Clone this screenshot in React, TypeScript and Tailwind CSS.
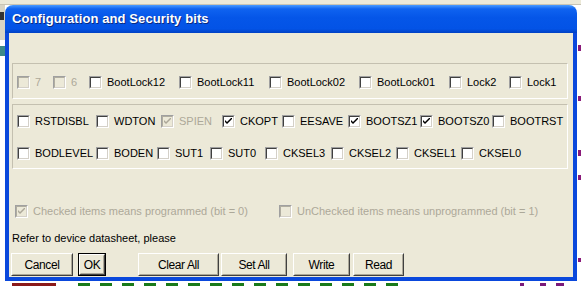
import React from "react";

const FONT = { fontFamily: '"Liberation Sans", Arial, sans-serif' };

function Box({ checked = false, disabled = false }: { checked?: boolean; disabled?: boolean }) {
  return (
    <div className="w-[13px] h-[13px] shrink-0 border border-t-[#a0a0a0] border-l-[#a0a0a0] border-b-white border-r-white">
      <div
        className={
          "w-full h-full border border-t-[#404040] border-l-[#404040] border-b-[#d4d0c8] border-r-[#d4d0c8] flex items-center justify-center " +
          (disabled ? "bg-[#ece9d8] border-t-[#b0ada0] border-l-[#b0ada0]" : "bg-white")
        }
      >
        {checked && (
          <svg width="7" height="7" viewBox="0 0 7 7">
            <path d="M0 2 L0 4 L2 6 L7 1 L7 -1 L2 4 Z" fill={disabled ? "#aca899" : "#000"} />
          </svg>
        )}
      </div>
    </div>
  );
}

type Item = { label: string; w?: number; checked?: boolean; disabled?: boolean };

function Check({ label, w, checked, disabled }: Item) {
  return (
    <div className="flex items-center gap-[5px] shrink-0" style={w ? { width: w } : undefined}>
      <Box checked={checked} disabled={disabled} />
      <span className={"text-[11px] leading-[13px] " + (disabled ? "text-[#aca899]" : "text-black")}>{label}</span>
    </div>
  );
}

function Row({ items }: { items: Item[] }) {
  return (
    <div className="flex items-center h-[13px]">
      {items.map((it) => (
        <Check key={it.label} {...it} />
      ))}
    </div>
  );
}

function Btn({ label, w, def = false }: { label: string; w: number; def?: boolean }) {
  return (
    <div className={"h-[23px] shrink-0 " + (def ? "border border-black" : "")} style={{ width: w }}>
      <div className="w-full h-full border border-t-white border-l-white border-b-[#404040] border-r-[#404040]">
        <div className="w-full h-full border border-t-[#ece9d8] border-l-[#ece9d8] border-b-[#aca899] border-r-[#aca899] flex items-center justify-center text-[12px] tracking-[-0.4px] text-black">
          {label}
        </div>
      </div>
    </div>
  );
}

export default function App() {
  const row1: Item[] = [
    { label: "7", w: 36, disabled: true },
    { label: "6", w: 36, disabled: true },
    { label: "BootLock12", w: 90 },
    { label: "BootLock11", w: 90 },
    { label: "BootLock02", w: 90 },
    { label: "BootLock01", w: 90 },
    { label: "Lock2", w: 60 },
    { label: "Lock1" },
  ];
  const row2: Item[] = [
    { label: "RSTDISBL", w: 79 },
    { label: "WDTON", w: 65 },
    { label: "SPIEN", w: 61, checked: true, disabled: true },
    { label: "CKOPT", w: 60, checked: true },
    { label: "EESAVE", w: 66 },
    { label: "BOOTSZ1", w: 72, checked: true },
    { label: "BOOTSZ0", w: 72, checked: true },
    { label: "BOOTRST" },
  ];
  const row3: Item[] = [
    { label: "BODLEVEL", w: 79 },
    { label: "BODEN", w: 61 },
    { label: "SUT1", w: 53 },
    { label: "SUT0", w: 55 },
    { label: "CKSEL3", w: 66 },
    { label: "CKSEL2", w: 65 },
    { label: "CKSEL1", w: 65 },
    { label: "CKSEL0" },
  ];

  const bottomMarks: { x: number; w: number; c: string }[] = [
    { x: 12, w: 44, c: "#8b1a1a" },
    { x: 78, w: 12, c: "#1a7a1a" },
    { x: 100, w: 12, c: "#1a7a1a" },
    { x: 122, w: 12, c: "#1a7a1a" },
    { x: 144, w: 12, c: "#1a7a1a" },
    { x: 166, w: 12, c: "#1a7a1a" },
    { x: 188, w: 12, c: "#1a7a1a" },
    { x: 210, w: 12, c: "#1a7a1a" },
    { x: 232, w: 12, c: "#1a7a1a" },
    { x: 254, w: 12, c: "#1a7a1a" },
    { x: 276, w: 12, c: "#1a7a1a" },
    { x: 298, w: 12, c: "#1a7a1a" },
    { x: 320, w: 12, c: "#1a7a1a" },
    { x: 342, w: 12, c: "#1a7a1a" },
    { x: 364, w: 12, c: "#1a7a1a" },
    { x: 386, w: 12, c: "#1a7a1a" },
    { x: 520, w: 4, c: "#7a1a7a" },
    { x: 540, w: 6, c: "#7a1a7a" },
    { x: 556, w: 8, c: "#7a1a7a" },
  ];

  return (
    <div className="relative w-[581px] h-[286px] overflow-hidden bg-white" style={FONT}>
      {/* background application fragments */}
      <div className="absolute left-0 top-0 w-[581px] h-[5px] bg-[#ece9d8] border-b border-[#c8c4b4]" />
      <div className="absolute left-0 top-[5px] w-[5px] h-[35px] bg-[#d8d4c4]" />
      <div className="absolute left-0 top-[12px] w-[4px] h-[8px] bg-[#333]" />
      <div className="absolute left-0 top-[46px] w-[5px] h-[10px] bg-[#3c8a8a]" />
      <div className="absolute right-0 top-[45px] w-[3px] h-[6px] bg-[#8a1a7a]" />
      <div className="absolute right-0 top-[96px] w-[3px] h-[5px] bg-[#8a1a7a]" />
      <div className="absolute right-0 top-[150px] w-[3px] h-[6px] bg-[#8a1a7a]" />
      <div className="absolute right-0 top-[175px] w-[3px] h-[5px] bg-[#8a1a7a]" />
      <div className="absolute right-0 top-[258px] w-[3px] h-[4px] bg-[#8a1a7a]" />
      {bottomMarks.map((m, i) => (
        <div
          key={i}
          className="absolute top-[283px] h-[3px]"
          style={{ left: m.x, width: m.w, backgroundColor: m.c }}
        />
      ))}

      {/* window */}
      <div className="absolute left-[5px] top-[5px] w-[572px] h-[276px] flex flex-col">
        <div className="h-[28px] shrink-0 rounded-t-[8px] bg-[linear-gradient(to_bottom,#4a9bff_0%,#0f63f0_14%,#0556e8_45%,#0353e6_85%,#0041c4_100%)] flex items-center pl-[7px]">
          <span className="text-white font-bold text-[13px] tracking-[0.1px] [text-shadow:1px_1px_0_#0a2a80]">
            Configuration and Security bits
          </span>
        </div>
        <div className="flex-1 border-x-[4px] border-b-[4px] border-[#0a48dc] bg-[#ece9d8] flex flex-col pl-[3px] pr-[5px]">
          {/* group 1 */}
          <div className="mt-[30px] h-[36px] border border-t-[#c4c0b0] border-l-[#c4c0b0] border-b-white border-r-white pl-[4px] pt-[12px]">
            <Row items={row1} />
          </div>
          {/* group 2 */}
          <div className="mt-[5px] h-[65px] border border-t-[#c4c0b0] border-l-[#c4c0b0] border-b-white border-r-white pl-[4px] pt-[10px] flex flex-col gap-[19px]">
            <Row items={row2} />
            <Row items={row3} />
          </div>
          {/* legend */}
          <div className="mt-[36px] flex items-center pl-[3px] h-[13px]">
            <div className="w-[264px]">
              <Check label="Checked items means programmed (bit = 0)" checked disabled />
            </div>
            <Check label="UnChecked items means unprogrammed (bit = 1)" disabled />
          </div>
          <div className="mt-[14px] text-[11px] leading-[13px] text-black">Refer to device datasheet, please</div>
          {/* buttons */}
          <div className="mt-[8px] flex items-center">
            <div className="ml-[-1px]"><Btn label="Cancel" w={62} /></div>
            <div className="ml-[5px]"><Btn label="OK" w={28} def /></div>
            <div className="ml-[32px]"><Btn label="Clear All" w={81} /></div>
            <div className="ml-[2px]"><Btn label="Set All" w={66} /></div>
            <div className="ml-[6px]"><Btn label="Write" w={57} /></div>
            <div className="ml-[3px]"><Btn label="Read" w={51} /></div>
          </div>
        </div>
      </div>
    </div>
  );
}
